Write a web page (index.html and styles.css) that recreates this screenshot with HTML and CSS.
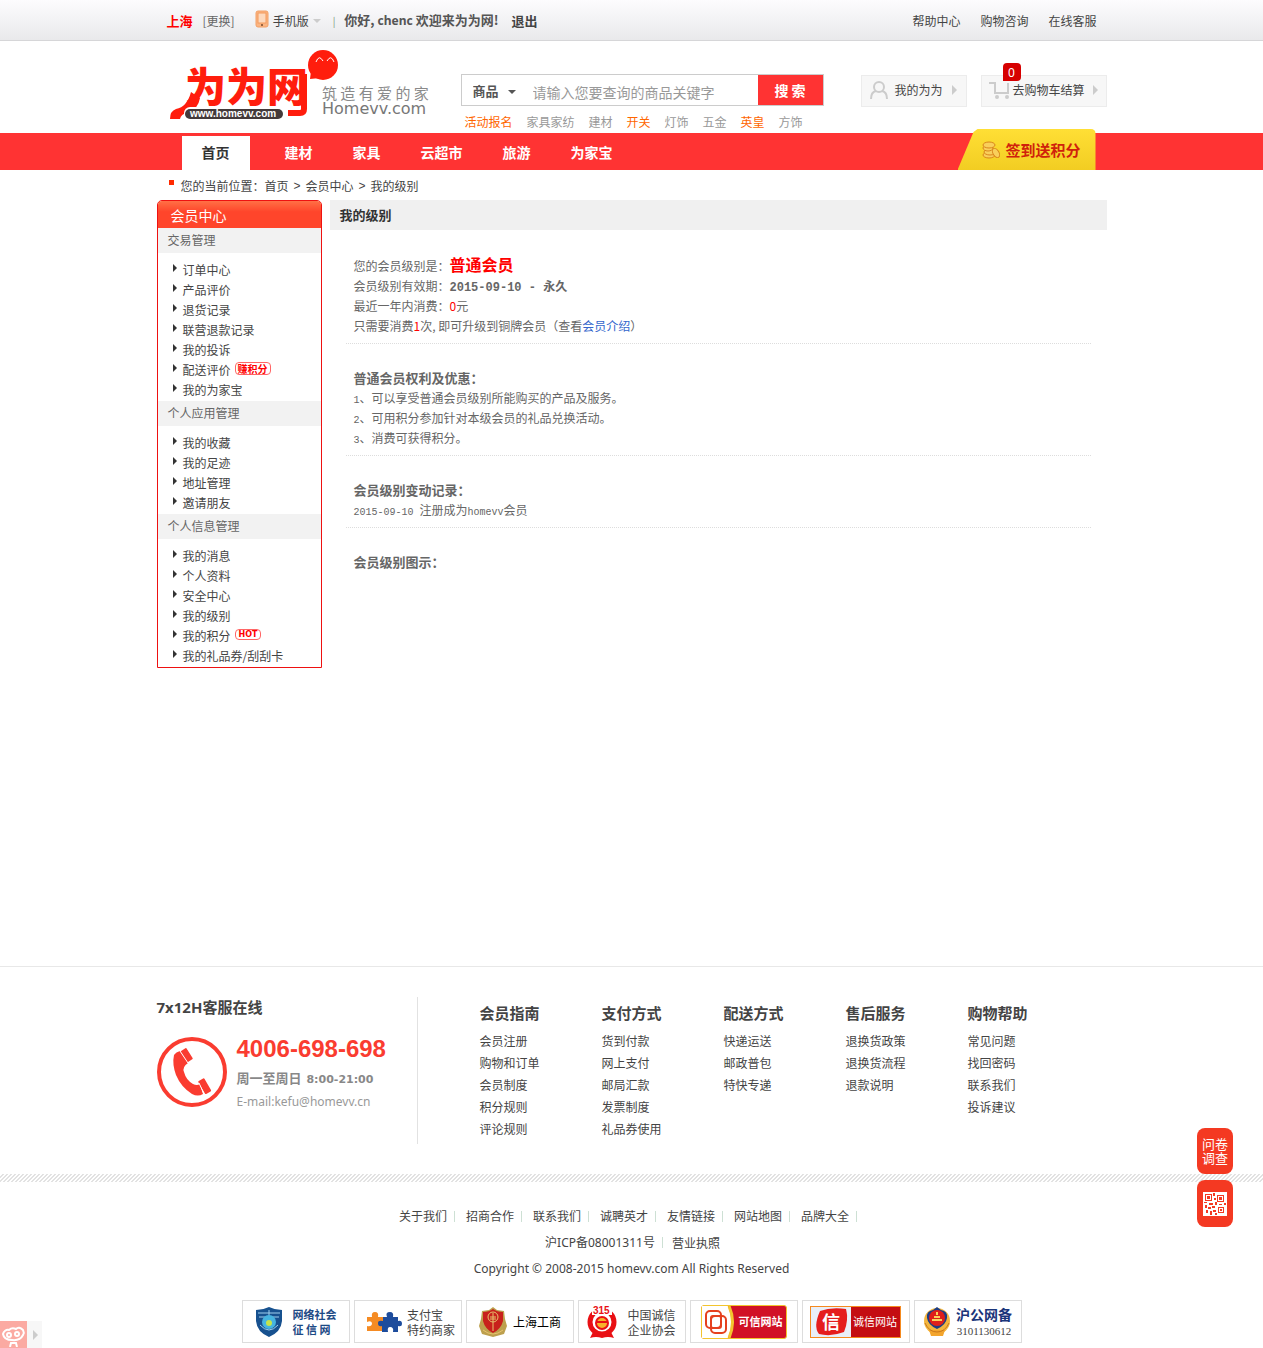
FILE: index.html
```html
<!DOCTYPE html>
<html lang="zh-CN">
<head>
<meta charset="utf-8">
<title>我的级别 - 为为网</title>
<link rel="stylesheet" href="styles.css">
</head>
<body>
<div class="topbar">
  <div class="wrap topbar-row">
    <strong class="city">上海</strong>
    <a class="switch" href="#">[更换]</a>
    <a class="mobile" href="#">
      <svg width="14" height="18" viewBox="0 0 14 18"><rect x="1" y="1" width="12" height="16" rx="2" fill="#fbb582" stroke="#f3a066"/><rect x="3" y="3" width="8" height="10" fill="#fdd9bd" stroke="#f39a5c"/><circle cx="7" cy="15" r="1" fill="#7a4a28"/></svg>
      手机版
      <i class="caret"></i>
    </a>
    <span class="bar">|</span>
    <strong class="hello">你好, <span class="latin">chenc</span> 欢迎来为为网!</strong>
    <a class="logout" href="#">退出</a>
    <nav class="topnav"><a href="#">帮助中心</a><a href="#">购物咨询</a><a href="#">在线客服</a></nav>
  </div>
</div>

<header class="wrap header">
  <a class="logo" href="#" aria-label="为为网">
    <svg width="260" height="70" viewBox="0 0 260 70">
      <text class="logo-name" x="15" y="52">为为网</text>
      <path d="M21 42Q17 57 6 59Q0 61 0 69H10Q11 64 17 63Q28 60 30 48Z" fill="#ff1d0d"/>
      <path d="M118 63H130Q134 63 134 59V24" fill="none" stroke="#ff1d0d" stroke-width="6"/>
      <rect x="14" y="57" width="101" height="13" rx="6" fill="#fff"/>
      <rect x="15" y="59" width="98" height="10" rx="5" fill="#443a3a"/>
      <text class="logo-url" x="20" y="67">www.homevv.com</text>
      <circle cx="153" cy="15" r="15" fill="#ff1d0d"/>
      <path d="M141 21L140 29L150 28Z" fill="#ff1d0d"/>
      <path d="M146 12Q149 4 153 11M157 11Q161 4 164 12" fill="none" stroke="#fff" stroke-width="1"/>
      <text class="logo-slogan" x="152" y="49">筑 造 有 爱 的 家</text>
      <text class="logo-domain" x="152" y="64">Homevv.com</text>
    </svg>
  </a>
  <div class="search">
    <form class="search-form">
      <div class="search-type"><select aria-label="搜索类型"><option>商品</option></select></div>
      <input class="search-input" type="text" aria-label="关键字" placeholder="请输入您要查询的商品关键字">
      <button class="search-btn" type="button">搜 索</button>
    </form>
    <div class="hot"><a class="on" href="#">活动报名</a><a href="#">家具家纺</a><a href="#">建材</a><a class="on" href="#">开关</a><a href="#">灯饰</a><a href="#">五金</a><a class="on" href="#">英皇</a><a href="#">方饰</a></div>
  </div>
  <div class="tools">
    <a class="tool" href="#">
      <svg width="18" height="18" viewBox="0 0 18 18" fill="none" stroke="#ccc" stroke-width="2"><circle cx="9" cy="6" r="5"/><path d="M1 18Q1 11 6 10M12 10Q17 11 17 18"/></svg>
      <span class="tool-text">我的为为</span><i class="arrow"></i>
    </a>
    <a class="tool cart" href="#">
      <svg width="21" height="18" viewBox="0 0 21 18" fill="none" stroke="#ccc" stroke-width="2"><path d="M0 2H6V12H19V2"/><circle cx="8" cy="16" r="1" /><circle cx="18" cy="16" r="1"/></svg>
      <span>去购物车结算</span><i class="arrow"></i>
      <b class="count">0</b>
    </a>
  </div>
</header>

<div class="mainnav">
  <div class="wrap mainnav-row">
    <nav class="tabs"><a class="tab current" href="#">首页</a><a class="tab" href="#">建材</a><a class="tab" href="#">家具</a><a class="tab" href="#">云超市</a><a class="tab" href="#">旅游</a><a class="tab" href="#">为家宝</a></nav>
    <a class="sign" href="#">
      <svg width="19" height="18" viewBox="0 0 19 18" fill="#f9cf5b" stroke="#d9861c"><ellipse cx="7" cy="14" rx="6" ry="3"/><ellipse cx="8" cy="11" rx="6" ry="3"/><ellipse cx="6" cy="7" rx="5" ry="3"/><ellipse cx="7" cy="4" rx="6" ry="3"/><ellipse cx="14" cy="12" rx="3" ry="5" transform="rotate(-30 14 12)"/></svg>
      签到送积分
    </a>
  </div>
</div>

<div class="wrap crumbs">您的当前位置：<a href="#">首页</a><span class="gt">&gt;</span><a href="#">会员中心</a><span class="gt">&gt;</span><a href="#">我的级别</a></div>

<div class="wrap content">
  <aside class="side">
    <h2 class="side-title">会员中心</h2>
    <h3 class="side-head">交易管理</h3>
    <ul class="side-list">
      <li><a href="#">订单中心</a></li><li><a href="#">产品评价</a></li><li><a href="#">退货记录</a></li><li><a href="#">联营退款记录</a></li><li><a href="#">我的投诉</a></li><li><a href="#">配送评价</a><span class="tag">赚积分</span></li><li><a href="#">我的为家宝</a></li>
    </ul>
    <h3 class="side-head">个人应用管理</h3>
    <ul class="side-list">
      <li><a href="#">我的收藏</a></li><li><a href="#">我的足迹</a></li><li><a href="#">地址管理</a></li><li><a href="#">邀请朋友</a></li>
    </ul>
    <h3 class="side-head">个人信息管理</h3>
    <ul class="side-list">
      <li><a href="#">我的消息</a></li><li><a href="#">个人资料</a></li><li><a href="#">安全中心</a></li><li><a href="#">我的级别</a></li><li><a href="#">我的积分</a><span class="tag hot-tag">HOT</span></li><li><a href="#">我的礼品券/刮刮卡</a></li>
    </ul>
  </aside>
  <main class="main">
    <h1 class="main-title">我的级别</h1>
    <div class="blocks">
      <section class="block">
        <p>您的会员级别是：<strong class="level">普通会员</strong></p>
        <p>会员级别有效期：<strong class="period">2015-09-10 - 永久</strong></p>
        <p>最近一年内消费：<span class="red">0</span>元</p>
        <p>只需要消费<b class="red">1</b>次, 即可升级到铜牌会员（查看<a class="blue" href="#">会员介绍</a>）</p>
      </section>
      <section class="block">
        <h4>普通会员权利及优惠：</h4>
        <p><span class="mono">1</span>、可以享受普通会员级别所能购买的产品及服务。</p>
        <p><span class="mono">2</span>、可用积分参加针对本级会员的礼品兑换活动。</p>
        <p><span class="mono">3</span>、消费可获得积分。</p>
      </section>
      <section class="block">
        <h4>会员级别变动记录：</h4>
        <p><span class="mono">2015-09-10 </span>注册成为<span class="mono">homevv</span>会员</p>
      </section>
      <section class="block last">
        <h4>会员级别图示：</h4>
      </section>
    </div>
  </main>
</div>

<footer class="footer">
  <div class="wrap help">
    <div class="service">
      <h3 class="service-title">7x12H客服在线</h3>
      <div class="service-row">
        <svg width="70" height="70" viewBox="0 0 70 70"><circle cx="35" cy="35" r="33" fill="none" stroke="#fa3c30" stroke-width="4"/><path d="M17 18Q19 15 23 14L31 26Q25 30 27 35Q29 43 36 47Q40 49 43 47L46 57Q41 60 35 57Q24 50 19 38Q15 27 17 18Z" fill="#fa3c30"/><rect x="26" y="12" width="7" height="13" rx="1" transform="rotate(-32 29 18)" fill="#fa3c30"/><rect x="44" y="42" width="7" height="15" rx="1" transform="rotate(-30 47 49)" fill="#fa3c30"/><path d="M23 14L31 26M42 46L47 57" stroke="#fff"/></svg>
        <div>
          <p class="phone">4006-698-698</p>
          <p class="hours">周一至周日 <span>8:00-21:00</span></p>
          <p class="mail">E-mail:kefu@homevv.cn</p>
        </div>
      </div>
    </div>
    <div class="cols">
      <dl><dt>会员指南</dt><dd><a href="#">会员注册</a></dd><dd><a href="#">购物和订单</a></dd><dd><a href="#">会员制度</a></dd><dd><a href="#">积分规则</a></dd><dd><a href="#">评论规则</a></dd></dl>
      <dl><dt>支付方式</dt><dd><a href="#">货到付款</a></dd><dd><a href="#">网上支付</a></dd><dd><a href="#">邮局汇款</a></dd><dd><a href="#">发票制度</a></dd><dd><a href="#">礼品券使用</a></dd></dl>
      <dl><dt>配送方式</dt><dd><a href="#">快递运送</a></dd><dd><a href="#">邮政普包</a></dd><dd><a href="#">特快专递</a></dd></dl>
      <dl><dt>售后服务</dt><dd><a href="#">退换货政策</a></dd><dd><a href="#">退换货流程</a></dd><dd><a href="#">退款说明</a></dd></dl>
      <dl><dt>购物帮助</dt><dd><a href="#">常见问题</a></dd><dd><a href="#">找回密码</a></dd><dd><a href="#">联系我们</a></dd><dd><a href="#">投诉建议</a></dd></dl>
    </div>
  </div>
  <div class="stripe"></div>
  <ul class="links"><li><a href="#">关于我们</a></li><li><a href="#">招商合作</a></li><li><a href="#">联系我们</a></li><li><a href="#">诚聘英才</a></li><li><a href="#">友情链接</a></li><li><a href="#">网站地图</a></li><li><a href="#">品牌大全</a></li></ul>
  <ul class="links"><li><a href="#">沪<span class="latin">ICP</span>备<span class="latin">08001311</span>号</a></li><li class="end"><a href="#">营业执照</a></li></ul>
  <p class="copy">Copyright © 2008-2015 homevv.com All Rights Reserved</p>
  <div class="badges">
    <a class="badge wide" href="#">
      <svg width="28" height="30" viewBox="0 0 28 30"><path d="M14 0Q20 3 27 3V14Q26 25 14 30Q2 25 1 14V3Q8 3 14 0Z" fill="#17518f"/><path d="M3 6H25M4 10H24M14 3V10M5 18Q14 28 23 18" stroke="#9fd0ee" fill="none"/><circle cx="14" cy="15" r="7" fill="#46b4e0"/><circle cx="14" cy="16" r="3" fill="#c5e44a"/></svg>
      <span class="t-blue">网络社会<br>征 信 网</span>
    </a>
    <a class="badge alipay" href="#">
      <svg width="36" height="22" viewBox="0 0 36 22"><path d="M1 6H6Q5 1 9 1Q13 1 12 6H18V20H1V15Q6 16 6 12Q5 9 1 11Z" fill="#f58b23"/><path d="M17 6H21Q19 1 24 1Q28 1 27 6H32V10Q36 9 36 13Q36 16 32 15V21H27Q28 16 24 16Q21 16 22 21H16V15Q12 16 12 12Q12 9 17 10Z" fill="#1d4c9c"/></svg>
      <span>支付宝<br>特约商家</span>
    </a>
    <a class="badge" href="#">
      <svg width="30" height="32" viewBox="0 0 30 32"><path d="M15 1L19 4L26 5L27 13L29 20L26 28L15 31L4 28L1 20L3 13L4 5L11 4Z" fill="#bda04e"/><path d="M15 3Q19 6 25 6V15Q23 23 15 27Q7 23 5 15V6Q11 6 15 3Z" fill="#c8201c"/><circle cx="15" cy="11" r="5" fill="none" stroke="#e7c26d"/><path d="M12 11H18M12 13H18M15 7V25M5 24Q15 32 25 24" stroke="#e7c26d" fill="none"/></svg>
      <span class="t-black">上海工商</span>
    </a>
    <a class="badge wide" href="#">
      <svg width="30" height="34" viewBox="0 0 30 34"><circle cx="15" cy="17" r="12" fill="#fff" stroke="#e91014" stroke-width="5"/><path d="M6 27H24L27 33Q21 31 15 33Q9 31 3 33Z" fill="#e91014"/><path d="M5 0H25V10H5Z" fill="#fff"/><text class="n315" x="6" y="9">315</text><circle cx="15" cy="18" r="6" fill="#f8b22a" stroke="#e91014" stroke-width="2"/><path d="M9 17H21" stroke="#e91014" stroke-width="2"/></svg>
      <span>中国诚信<br>企业协会</span>
    </a>
    <a class="badge" href="#">
      <span class="plate gold">
        <svg width="32" height="32" viewBox="0 0 32 32"><path d="M0 0H26Q33 16 26 32H0Z" fill="#fff"/><path d="M27 0Q34 16 27 32" fill="none" stroke="#f3c52e" stroke-width="3"/><g fill="none" stroke="#e5411f" stroke-width="2"><rect x="4" y="5" width="15" height="17" rx="4"/><rect x="9" y="10" width="15" height="17" rx="4"/><rect x="9" y="10" width="10" height="12" rx="2"/></g></svg>
        <span>可信网站</span>
      </span>
    </a>
    <a class="badge" href="#">
      <span class="plate">
        <svg width="40" height="30" viewBox="0 0 40 30"><rect width="40" height="30" fill="#e9eff8"/><path d="M9 4Q20 0 35 2Q38 13 33 25Q20 30 8 27Q2 20 9 4Z" fill="#e51d1d"/><text class="xin" x="11" y="22">信</text></svg>
        <span>诚信网站</span>
      </span>
    </a>
    <a class="badge" href="#">
      <svg width="28" height="31" viewBox="0 0 28 31"><circle cx="14" cy="15" r="13" fill="#f3b63e"/><path d="M6 24H22L20 30H8Z" fill="#f3a52d"/><path d="M14 1L18 4Q25 5 24 12Q23 19 14 23Q5 19 4 12Q3 5 10 4Z" fill="#1e3d83"/><circle cx="14" cy="12" r="8" fill="#df1f1a"/><path d="M9 14H19M11 11H17M14 6V9" stroke="#fad25a" stroke-width="2"/><path d="M2 17Q6 26 14 26Q22 26 26 17" fill="none" stroke="#c9781b"/></svg>
      <span class="t-police">沪公网备<br><small>3101130612</small></span>
    </a>
  </div>
</footer>

<div class="floats">
  <a class="float" href="#">问卷<br>调查</a>
  <a class="float" href="#" aria-label="二维码">
    <svg width="24" height="24" viewBox="0 0 24 24"><rect width="24" height="24" fill="#fff"/><g fill="none" stroke="#f43922" stroke-width="1"><rect x="2.500" y="2.500" width="6" height="6"/><rect x="14.500" y="3.500" width="6" height="6"/><rect x="15.500" y="15.500" width="5" height="5"/></g><path d="M4 4h3v3h-3zM16 5h3v3h-3zM17 17h2v2h-2zM10 1h2v3h-2zM11 6h2v2h-2zM1 10h3v1h-3zM6 11h4v2h-4zM12 10h2v3h-2zM16 12h3v1h-3zM21 11h2v2h-2zM2 13h2v3h-2zM5 15h3v2h-3zM9 14h3v2h-3zM3 18h2v3h-2zM7 19h2v4h-2zM10 18h3v2h-3zM12 21h2v2h-2z" fill="#f43922"/></svg>
  </a>
</div>
<a class="corner" href="#" aria-label="分享">
  <span class="corner-face"><svg width="26" height="26" viewBox="0 0 26 26" fill="none" stroke="#fff" stroke-width="2"><path d="M3 13A5 5 0 0 1 9 9Q12 6 16 8Q19 5 23 9A5 5 0 0 1 23 14Q20 20 12 19Q4 19 3 13Z"/><circle cx="9" cy="14" r="2"/><circle cx="17" cy="13" r="2"/><path d="M10 26L11 22H16L17 26"/></svg></span>
  <i class="arrow"></i>
</a>
</body>
</html>
```
FILE: styles.css
```css
* { box-sizing: border-box; margin: 0; padding: 0; }
body { background: #fff; color: #444; font: 12px/20px "Noto Sans CJK SC", sans-serif; }
a { color: inherit; text-decoration: none; }
ul { list-style: none; }
svg { display: block; flex: none; }
.wrap { width: 950px; max-width: 100%; margin: 0 auto; }
.latin { font-family: "Noto Sans", sans-serif; }
.mono { font: 10px/20px "Liberation Mono", monospace; }
.arrow { border: 5px solid transparent; border-left-color: #ccc; border-right: 0; }

/* top bar */
.topbar { background: linear-gradient(#fdfcfe, #e9e9eb); border-bottom: 1px solid #d6d6d8; }
.topbar-row { display: flex; align-items: center; height: 40px; padding: 1px 10px 0; }
.city { color: #f00; font-size: 13px; }
.switch { margin-left: 10px; color: #666; }
.mobile { display: flex; align-items: center; gap: 4px; margin-left: 20px; }
.mobile svg { margin-bottom: 4px; }
.caret { border: 4px solid transparent; border-top-color: #ccc; border-bottom: 0; }
.bar { margin: 0 9px 0 12px; color: #7a9a7a; font-size: 10px; }
.hello { color: #555; font-size: 13px; }
.hello .latin { font-size: 12px; }
.logout { margin-left: 13px; font-size: 13px; font-weight: bold; }
.topnav { display: flex; gap: 20px; margin-left: auto; }

/* header */
.header { display: flex; align-items: flex-start; min-height: 92px; }
.logo { margin: 9px 0 0 13px; }
.logo-name { font: 900 41px "Noto Sans CJK SC", sans-serif; fill: #ff1d0d; }
.logo-url { font: bold 10px "Liberation Sans", sans-serif; fill: #fff; }
.logo-slogan { font: 15px "Noto Sans CJK SC", sans-serif; fill: #8a8a8a; }
.logo-domain { font: 16px "DejaVu Sans", sans-serif; fill: #777; }
.search { margin: 33px 0 0 31px; }
.search-form { display: flex; width: 363px; height: 32px; border: 1px solid #ccc; }
.search-type { display: flex; align-items: center; width: 64px; padding-left: 11px; }
.search-type select { width: 35px; border: 0; background: none; appearance: none; color: #555; font: bold 13px "Noto Sans CJK SC", sans-serif; }
.search-type::after { content: ""; margin-top: 3px; border: 4px solid transparent; border-top-color: #555; border-bottom: 0; }
.search-input { flex: 1; min-width: 0; border: 0; padding: 3px 0 0 7px; color: #444; font: 14px "Noto Sans CJK SC", sans-serif; }
.search-input::placeholder { color: #999; }
.search-btn { width: 65px; border: 0; background: #f33; color: #fff; font: bold 14px "Noto Sans CJK SC", sans-serif; }
.hot { display: flex; gap: 14px; margin: 6px 0 0 4px; color: #999; }
.hot .on { color: #f60; }
.tools { display: flex; gap: 14px; margin: 34px 0 0 auto; }
.tool { position: relative; display: flex; align-items: center; width: 106px; height: 32px; padding: 0 0 2px 8px; border: 1px solid #ececec; background: #f7f7f7; }
.tool-text { margin-left: 7px; }
.tool .arrow { margin-left: 9px; }
.cart { width: 126px; padding-left: 7px; }
.cart span { margin-left: 3px; }
.cart .arrow { margin-left: 8px; }
.count { position: absolute; left: 21px; top: -13px; width: 18px; height: 18px; border-radius: 4px 4px 4px 0; background: #d60000; color: #fff; font: 12px/20px "Noto Sans", sans-serif; text-align: center; }

/* main navigation */
.mainnav { background: #f33; }
.mainnav-row { display: flex; justify-content: space-between; align-items: flex-end; height: 37px; padding: 0 11px 0 25px; }
.tabs { display: flex; }
.tab { height: 34px; padding: 0 20px; color: #fff; font: bold 14px/33px "Noto Sans CJK SC", sans-serif; }
.tab.current { margin-right: 15px; background: #fff; color: #333; }
.sign { display: flex; align-items: center; gap: 5px; width: 138px; height: 41px; padding-left: 24px; background: linear-gradient(#ffdf35, #f2cd22); border-radius: 0 5px 0 0; clip-path: polygon(0 100%, 16px 3px, 20px 0, 100% 0, 100% 100%); color: #d0210b; font: bold 15px "Noto Sans CJK SC", sans-serif; }

.crumbs { display: flex; height: 30px; padding-left: 24px; line-height: 32px; background: linear-gradient(#ff2a00, #ff2a00) 12px 10px / 5px 5px no-repeat; }
.gt { margin: 0 5px; font-family: "Liberation Sans", sans-serif; }

/* body columns */
.content { display: flex; align-items: flex-start; gap: 8px; min-height: 766px; }
.side { width: 165px; border: 1px solid #e11; border-radius: 5px 5px 0 0; overflow: hidden; padding-bottom: 1px; }
.side-title { height: 27px; padding-left: 13px; background: linear-gradient(#ff7045, #ff452b 40%); color: #fff; font-size: 14px; font-weight: normal; line-height: 28px; }
.side-head { height: 25px; padding-left: 10px; background: #f2f2f2; color: #666; font-size: 12px; font-weight: normal; line-height: 24px; }
.side-list { padding: 7px 0 1px 15px; }
.side-list:last-child { padding-bottom: 0; }
.side-list li { display: flex; align-items: center; height: 20px; }
.side-list li::before { content: ""; margin: 0 6px 4px 0; border: 4px solid transparent; border-left-color: #333; border-right: 0; }
.tag { margin: 0 0 4px 4px; padding: 0 2px; border: 1px solid #f66; border-radius: 4px; color: #f00; font-size: 10px; font-weight: bold; line-height: 11px; }
.hot-tag { padding: 0 3px; font: bold 8px/9px "DejaVu Sans", sans-serif; }
.main { flex: 1; min-width: 0; color: #666; }
.main-title { height: 30px; padding-left: 10px; background: #f0f0f0; color: #333; font-size: 13px; line-height: 30px; }
.blocks { padding: 2px 16px 0; }
.block { padding: 24px 0 7px 8px; border-bottom: 1px dotted #ddd; }
.block.last { border: 0; }
.block h4 { font-size: 13px; line-height: 20px; }
.block p { height: 20px; white-space: nowrap; }
.level { color: #f00; font-size: 16px; line-height: 16px; }
.period { font-family: "Liberation Mono", "Noto Sans CJK SC", monospace; }
.red { color: #f00; font-weight: normal; }
.blue { color: #36c; }

/* footer */
.footer { border-top: 1px solid #e8e8e8; padding-bottom: 5px; }
.help { display: flex; padding: 30px 0; }
.service { width: 261px; min-height: 147px; border-right: 1px solid #e2e2e2; }
.service-title { font: bold 15px/20px "Noto Sans", "Noto Sans CJK SC", sans-serif; }
.service-row { display: flex; gap: 10px; margin-top: 20px; }
.phone { color: #fa3c30; font: bold 24px/24px "Liberation Sans", sans-serif; }
.hours { margin-top: 5px; color: #888; font: bold 13px/24px "Noto Sans CJK SC", sans-serif; }
.hours span { margin-left: 2px; font: bold 11px/20px "DejaVu Sans", sans-serif; }
.mail { color: #999; font: 12px/24px "Noto Sans", sans-serif; }
.cols { display: grid; grid-template-columns: repeat(5, 122px); margin: 6px 0 0 62px; }
.cols dt { margin-bottom: 7px; font-size: 15px; font-weight: bold; line-height: 20px; }
.cols dd { line-height: 22px; }
.stripe { height: 8px; margin-bottom: 21px; background: linear-gradient(135deg, #fff 25%, #e2e2e2 25% 50%, #fff 50% 75%, #e2e2e2 75%) 0 0 / 4px 4px; }
.links { display: flex; justify-content: center; line-height: 26px; }
.links li { display: flex; align-items: center; padding: 0 9px 0 2px; }
.links li::after { content: ""; width: 1px; height: 11px; margin-left: 7px; background: #cde0d4; }
.links .end { padding: 0; }
.links .end::after { display: none; }
.copy { text-align: center; font: 12px/26px "Noto Sans", sans-serif; }
.badges { display: flex; justify-content: center; gap: 4px; margin-top: 18px; }
.badge { display: flex; align-items: center; justify-content: center; gap: 5px; width: 108px; height: 43px; border: 1px solid #ddd; line-height: 15px; white-space: nowrap; }
.badge.wide { gap: 10px; }
.alipay { padding-left: 6px; }
.t-blue { color: #1d4a85; font-size: 11px; font-weight: bold; }
.t-black { color: #000; }
.t-police { color: #1b357a; font-size: 14px; font-weight: bold; text-align: center; }
.t-police small { color: #444; font: 11px/12px "Liberation Serif", serif; }
.n315 { font: bold 10px "Liberation Sans", sans-serif; fill: #e91014; }
.plate { display: flex; align-items: center; justify-content: space-between; width: 91px; height: 32px; padding-right: 3px; border: 1px solid #f58a1f; background: #c40d12; color: #fff; font-size: 11px; }
.plate.gold { width: 86px; height: 34px; border-color: #f3c52e; border-radius: 3px; background: #d11126; font-weight: bold; }
.xin { font: bold 18px "Noto Sans CJK SC", sans-serif; fill: #fff; }

/* floating widgets */
.floats { position: fixed; right: 30px; bottom: 121px; display: grid; gap: 6px; }
.float { display: grid; place-items: center; width: 36px; height: 46px; border-radius: 8px; background: #f43922; color: #fff; font-size: 13px; line-height: 14px; }
.float:last-child { height: 47px; }
.corner { position: fixed; left: 0; bottom: 0; display: flex; align-items: center; gap: 6px; width: 42px; height: 27px; background: #f7f7f7; }
.corner-face { width: 27px; height: 27px; background: #fbaaa2; }
```
